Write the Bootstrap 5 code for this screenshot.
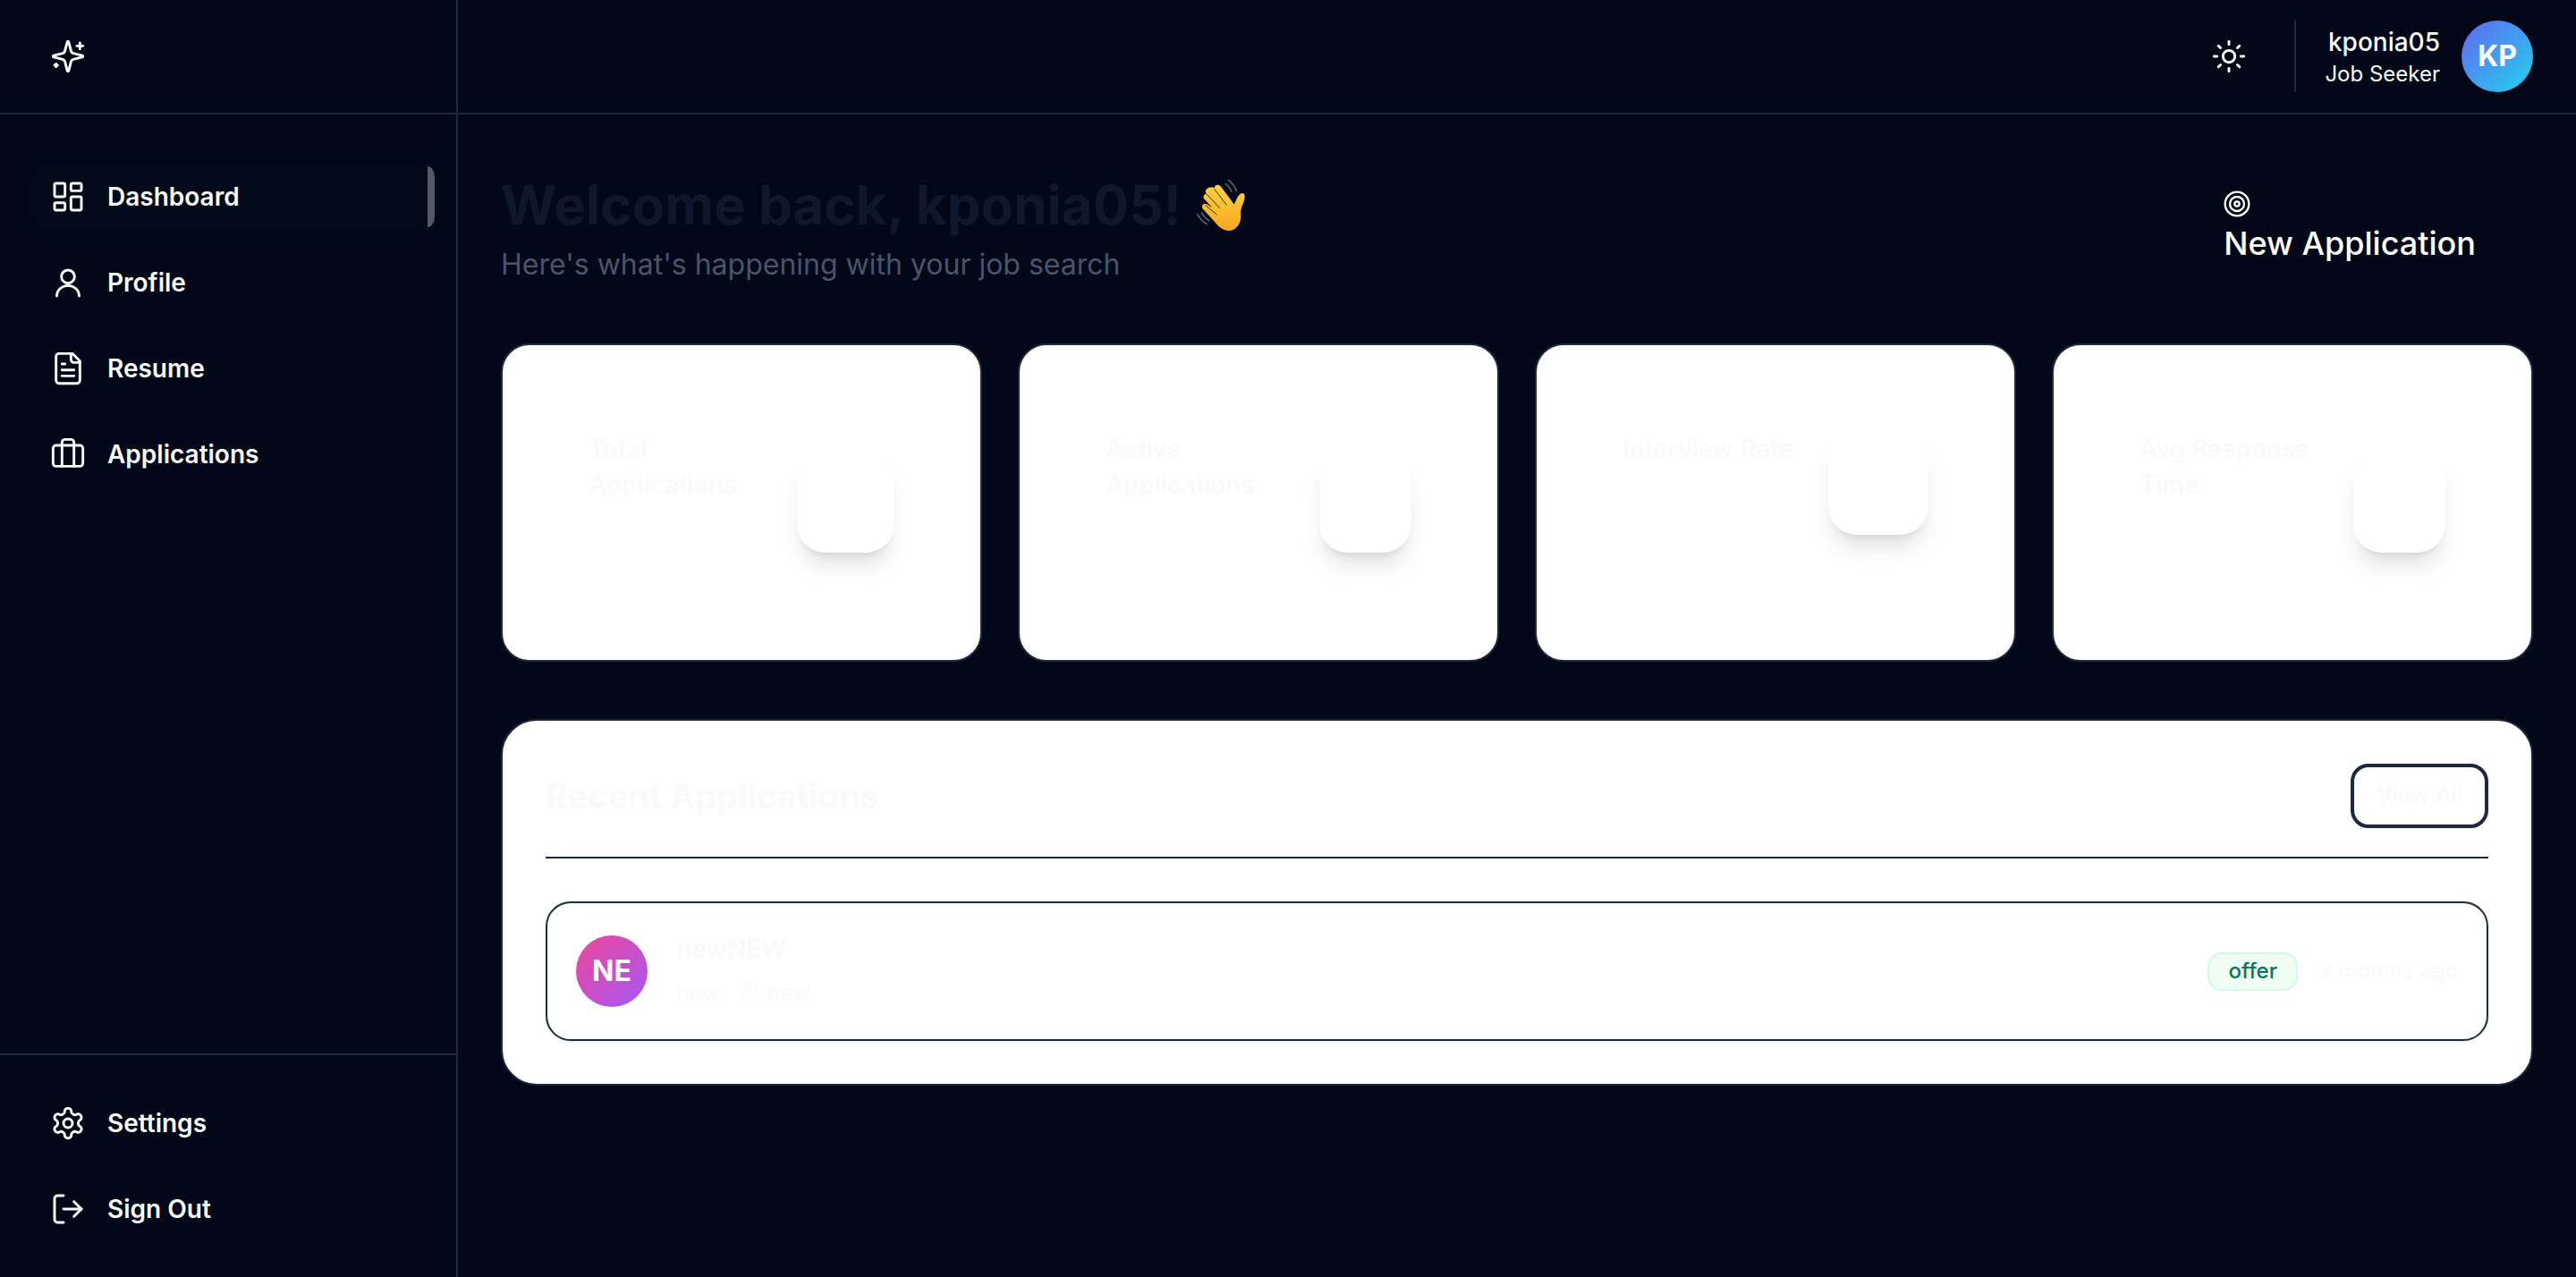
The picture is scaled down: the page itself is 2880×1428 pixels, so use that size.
<!DOCTYPE html>
<html lang="en">
<head>
  <meta charset="UTF-8" />
  <meta name="viewport" content="width=device-width, initial-scale=1.0" />
  <title>Dashboard</title>
  <link rel="stylesheet" href="https://cdn.jsdelivr.net/npm/bootstrap@5.3.3/dist/css/bootstrap.min.css" />
  <script src="https://cdn.jsdelivr.net/npm/bootstrap@5.3.3/dist/js/bootstrap.bundle.min.js"></script>
  <style>
    body {
      font-family: "Inter", "Liberation Sans", sans-serif;
      background-color: #020817;
      color: #f8fafc;
      height: 100vh;
      overflow: hidden;
    }
    svg.ico {
      fill: none;
      stroke: currentColor;
      stroke-width: 1.75;
      stroke-linecap: round;
      stroke-linejoin: round;
      flex-shrink: 0;
    }
    .side-bar {
      width: 512px;
      border-right: 2px solid #1e293b;
    }
    .side-top { height: 128px; padding-left: 56px; border-bottom: 2px solid #1e293b; }
    .side-nav { padding: 52px 32px 31px; }
    .side-foot { padding: 36px 32px; border-top: 2px solid #1e293b; }
    .side-link {
      position: relative;
      height: 80px;
      padding: 0 24px;
      gap: 24px;
      border-radius: 24px;
      color: #f8fafc;
      font-size: 28px;
      font-weight: 600;
      text-decoration: none;
    }
    .side-link.is-on { background: rgba(15, 23, 42, .07); }
    .side-link.is-on::after {
      content: "";
      position: absolute;
      right: -8px;
      top: 6px;
      width: 8px;
      height: 68px;
      background: #525866;
      border-radius: 0 8px 8px 0 / 0 12px 12px 0;
    }
    .top-head { height: 128px; padding: 0 48px; border-bottom: 2px solid #1e293b; }
    .theme-btn { width: 40px; height: 40px; margin-right: 53px; color: #f8fafc; }
    .head-user { height: 80px; border-left: 2px solid #1e293b; padding-left: 32px; gap: 24px; }
    .user-name { font-size: 28px; font-weight: 500; line-height: 40px; }
    .user-role { font-size: 24px; line-height: 32px; }
    .round-pic {
      width: 80px;
      height: 80px;
      border-radius: 50%;
      color: #fff;
      font-size: 32px;
      font-weight: 700;
    }
    .pic-blue { background: linear-gradient(135deg, #6366f1, #22d3ee); }
    .pic-pink { background: linear-gradient(135deg, #ec4899, #a855f7); }
    .page-body { padding: 48px; }
    .welcome-row { height: 208px; }
    .welcome-title { font-size: 60px; font-weight: 700; line-height: 72px; color: #0f172a; margin: 17px 0 0; gap: 16px; }
    .welcome-sub { font-size: 32px; line-height: 48px; color: #475569; margin: 7px 0 0; }
    .new-btn { padding: 36px 64px 0; font-size: 36px; font-weight: 500; line-height: 48px; color: #fff; }
    .new-btn svg { display: block; margin: 0 0 4px -1px; }
    .stat-grid { display: grid; grid-template-columns: repeat(4, 1fr); gap: 40px; }
    .stat-tile {
      background: #fff;
      border: 2px solid #1e293b;
      border-radius: 32px;
      height: 356px;
      padding: 96px;
      gap: 32px;
    }
    .stat-label { font-size: 28px; font-weight: 500; line-height: 40px; color: #f8fafc; margin-bottom: 76px; }
    .stat-box {
      height: 116px;
      background: #fff;
      border-radius: 32px;
      box-shadow: 0 20px 25px -5px rgba(0, 0, 0, .1), 0 8px 10px -6px rgba(0, 0, 0, .1);
      flex-shrink: 0;
    }
    .box-109 { width: 109px; margin-top: 20px; }
    .box-103 { width: 103px; margin-top: 20px; }
    .box-112 { width: 112px; }
    .recent-panel {
      background: #fff;
      border: 2px solid #1e293b;
      border-radius: 40px;
      margin-top: 64px;
      padding: 48px;
    }
    .recent-head { padding-bottom: 32px; border-bottom: 2px solid #1e293b; }
    .recent-title { font-size: 38px; font-weight: 700; line-height: 56px; color: #f8fafc; margin: 0; }
    .view-btn {
      width: 154px;
      height: 72px;
      border: 4px solid #1e293b;
      border-radius: 20px;
      background: #fff;
      font-size: 25px;
      font-weight: 500;
      color: #f8fafc;
      box-shadow: 0 1px 2px rgba(0, 0, 0, .05);
    }
    .app-row {
      height: 156px;
      margin-top: 48px;
      padding: 0 32px;
      gap: 32px;
      border: 2px solid #1e293b;
      border-radius: 28px;
      box-shadow: 0 1px 3px rgba(0, 0, 0, .1);
    }
    .app-name { font-size: 28px; font-weight: 600; line-height: 38px; color: #f8fafc; margin-top: 1px; }
    .app-sub { font-size: 25px; line-height: 42px; color: #f8fafc; gap: 20px; margin-top: 9px; }
    .offer-tag {
      height: 43px;
      padding: 0 21px;
      border: 2px solid #d1fae5;
      border-radius: 16px;
      background: #f0fdf4;
      color: #047857;
      font-size: 24px;
      font-weight: 500;
    }
    .app-when { font-size: 24px; color: #f8fafc; margin-left: 24px; }
  </style>
</head>
<body>
  <div class="d-flex h-100">
    <aside class="side-bar d-flex flex-column flex-shrink-0">
      <div class="side-top d-flex align-items-center">
        <svg class="ico" width="40" height="40" viewBox="0 0 24 24"><path d="M9.937 15.5A2 2 0 0 0 8.5 14.063l-6.135-1.582a.5.5 0 0 1 0-.962L8.5 9.936A2 2 0 0 0 9.937 8.5l1.582-6.135a.5.5 0 0 1 .963 0L14.063 8.5A2 2 0 0 0 15.5 9.937l6.135 1.581a.5.5 0 0 1 0 .964L15.5 14.063a2 2 0 0 0-1.437 1.437l-1.582 6.135a.5.5 0 0 1-.963 0z"/><path d="M20 3v4"/><path d="M22 5h-4"/><path d="M4 17v2"/><path d="M5 18H3"/></svg>
      </div>
      <nav class="side-nav d-flex flex-column gap-3 flex-grow-1">
        <a class="side-link is-on d-flex align-items-center" href="#">
          <svg class="ico" width="40" height="40" viewBox="0 0 24 24"><rect width="7" height="9" x="3" y="3" rx="1"/><rect width="7" height="5" x="14" y="3" rx="1"/><rect width="7" height="9" x="14" y="12" rx="1"/><rect width="7" height="5" x="3" y="16" rx="1"/></svg>
          Dashboard
        </a>
        <a class="side-link d-flex align-items-center" href="#">
          <svg class="ico" width="40" height="40" viewBox="0 0 24 24"><circle cx="12" cy="8" r="4.4"/><path d="M19.5 21a7.5 7 0 0 0-15 0"/></svg>
          Profile
        </a>
        <a class="side-link d-flex align-items-center" href="#">
          <svg class="ico" width="40" height="40" viewBox="0 0 24 24"><path d="M15 2H6a2 2 0 0 0-2 2v16a2 2 0 0 0 2 2h12a2 2 0 0 0 2-2V7Z"/><path d="M14 2v4a2 2 0 0 0 2 2h4"/><path d="M10 9H8"/><path d="M16 13H8"/><path d="M16 17H8"/></svg>
          Resume
        </a>
        <a class="side-link d-flex align-items-center" href="#">
          <svg class="ico" width="40" height="40" viewBox="0 0 24 24"><rect width="20" height="14" x="2" y="6" rx="2"/><path d="M16 20V4a2 2 0 0 0-2-2h-4a2 2 0 0 0-2 2v16"/></svg>
          Applications
        </a>
      </nav>
      <div class="side-foot d-flex flex-column gap-3">
        <a class="side-link d-flex align-items-center" href="#">
          <svg class="ico" width="40" height="40" viewBox="0 0 24 24"><path d="M12.22 2h-.44a2 2 0 0 0-2 2v.18a2 2 0 0 1-1 1.73l-.43.25a2 2 0 0 1-2 0l-.15-.08a2 2 0 0 0-2.73.73l-.22.38a2 2 0 0 0 .73 2.73l.15.1a2 2 0 0 1 1 1.72v.51a2 2 0 0 1-1 1.74l-.15.09a2 2 0 0 0-.73 2.73l.22.38a2 2 0 0 0 2.73.73l.15-.08a2 2 0 0 1 2 0l.43.25a2 2 0 0 1 1 1.73V20a2 2 0 0 0 2 2h.44a2 2 0 0 0 2-2v-.18a2 2 0 0 1 1-1.73l.43-.25a2 2 0 0 1 2 0l.15.08a2 2 0 0 0 2.73-.73l.22-.39a2 2 0 0 0-.73-2.73l-.15-.08a2 2 0 0 1-1-1.74v-.5a2 2 0 0 1 1-1.74l.15-.09a2 2 0 0 0 .73-2.73l-.22-.38a2 2 0 0 0-2.73-.73l-.15.08a2 2 0 0 1-2 0l-.43-.25a2 2 0 0 1-1-1.73V4a2 2 0 0 0-2-2z"/><circle cx="12" cy="12" r="3"/></svg>
          Settings
        </a>
        <a class="side-link d-flex align-items-center" href="#">
          <svg class="ico" width="40" height="40" viewBox="0 0 24 24"><path d="M9 21H5a2 2 0 0 1-2-2V5a2 2 0 0 1 2-2h4"/><polyline points="16 17 21 12 16 7"/><line x1="21" x2="9" y1="12" y2="12"/></svg>
          Sign Out
        </a>
      </div>
    </aside>

    <div class="flex-grow-1 d-flex flex-column">
      <header class="top-head d-flex align-items-center justify-content-end">
        <div class="theme-btn">
          <svg class="ico d-block" width="40" height="40" viewBox="0 0 24 24"><circle cx="12" cy="12" r="4"/><path d="M12 2v2"/><path d="M12 20v2"/><path d="m4.93 4.93 1.41 1.41"/><path d="m17.66 17.66 1.41 1.41"/><path d="M2 12h2"/><path d="M20 12h2"/><path d="m6.34 17.66-1.41 1.41"/><path d="m19.07 4.93-1.41 1.41"/></svg>
        </div>
        <div class="head-user d-flex align-items-center">
          <div class="text-end">
            <div class="user-name">kponia05</div>
            <div class="user-role">Job Seeker</div>
          </div>
          <div class="round-pic pic-blue d-flex align-items-center justify-content-center">KP</div>
        </div>
      </header>

      <main class="page-body flex-grow-1">
        <div class="welcome-row d-flex justify-content-between align-items-start">
          <div>
            <h1 class="welcome-title d-flex align-items-center">Welcome back, kponia05!
              <!-- waving hand, the emoji font is not available -->
              <svg width="63" height="63" viewBox="40 30 190 190">
                <defs>
                  <linearGradient id="handFill" x1="0" y1="0" x2="0" y2="1">
                    <stop offset="0" stop-color="#ffd23f"/>
                    <stop offset="1" stop-color="#f6a821"/>
                  </linearGradient>
                </defs>
                <g fill="none" stroke="#62666d" stroke-width="4.5" stroke-linecap="round">
                  <path d="M140 53c9 6 16 15 21 27"/>
                  <path d="M150 40c11 8 20 20 27 37"/>
                  <path d="M45 155c6 12 14 24 32 34"/>
                  <path d="M59 149c5 11 12 20 26 28"/>
                </g>
                <path d="M77 70c-6 5-5 11-1 16l-4 1c-8 4-8 13-3 18l26 28-7-4-10-7c-8-5-16 0-17 7-1 5 2 9 6 12l43 47c15 18 38 29 57 19 19-10 26-30 24-52-1-12 4-26 9-38 3-8 6-15 4-27-1-6-8-8-13-4-9 6-15 20-20 33l-2 3-45-60c-5-7-13-7-18-3-2 2-3 4-3 7l-1 1c-8-5-17-4-25 3z" fill="url(#handFill)"/>
                <g fill="none" stroke="#3d2a0a" stroke-width="3" stroke-linecap="round">
                  <path d="M103 71l40 53"/>
                  <path d="M77 88l44 47"/>
                  <path d="M72 125l38 31"/>
                </g>
              </svg>
            </h1>
            <p class="welcome-sub">Here's what's happening with your job search</p>
          </div>
          <div class="new-btn">
            <svg class="ico" width="32" height="32" viewBox="0 0 24 24"><circle cx="12" cy="12" r="10"/><circle cx="12" cy="12" r="6"/><circle cx="12" cy="12" r="2"/></svg>
            New Application
          </div>
        </div>

        <div class="stat-grid">
          <div class="stat-tile d-flex justify-content-between align-items-start">
            <div class="stat-label">Total Applications</div>
            <div class="stat-box box-109"></div>
          </div>
          <div class="stat-tile d-flex justify-content-between align-items-start">
            <div class="stat-label">Active Applications</div>
            <div class="stat-box box-103"></div>
          </div>
          <div class="stat-tile d-flex justify-content-between align-items-start">
            <div class="stat-label">Interview Rate</div>
            <div class="stat-box box-112"></div>
          </div>
          <div class="stat-tile d-flex justify-content-between align-items-start">
            <div class="stat-label">Avg Response Time</div>
            <div class="stat-box box-103"></div>
          </div>
        </div>

        <section class="recent-panel">
          <div class="recent-head d-flex justify-content-between align-items-center">
            <h2 class="recent-title">Recent Applications</h2>
            <button class="view-btn p-0" type="button">View All</button>
          </div>
          <div class="app-row d-flex align-items-center">
            <div class="round-pic pic-pink d-flex align-items-center justify-content-center flex-shrink-0">NE</div>
            <div class="flex-grow-1">
              <div class="app-name">newNEW</div>
              <div class="app-sub d-flex align-items-center">
                <span>new</span>
                <span class="d-flex align-items-center gap-2">
                  <svg class="ico" width="24" height="24" viewBox="0 0 24 24"><path d="M20 10c0 6-8 12-8 12s-8-6-8-12a8 8 0 0 1 16 0Z"/><circle cx="12" cy="10" r="3"/></svg>
                  new
                </span>
              </div>
            </div>
            <div class="d-flex align-items-center">
              <span class="offer-tag d-flex align-items-center">offer</span>
              <span class="app-when">2 months ago</span>
            </div>
          </div>
        </section>
      </main>
    </div>
  </div>
</body>
</html>
